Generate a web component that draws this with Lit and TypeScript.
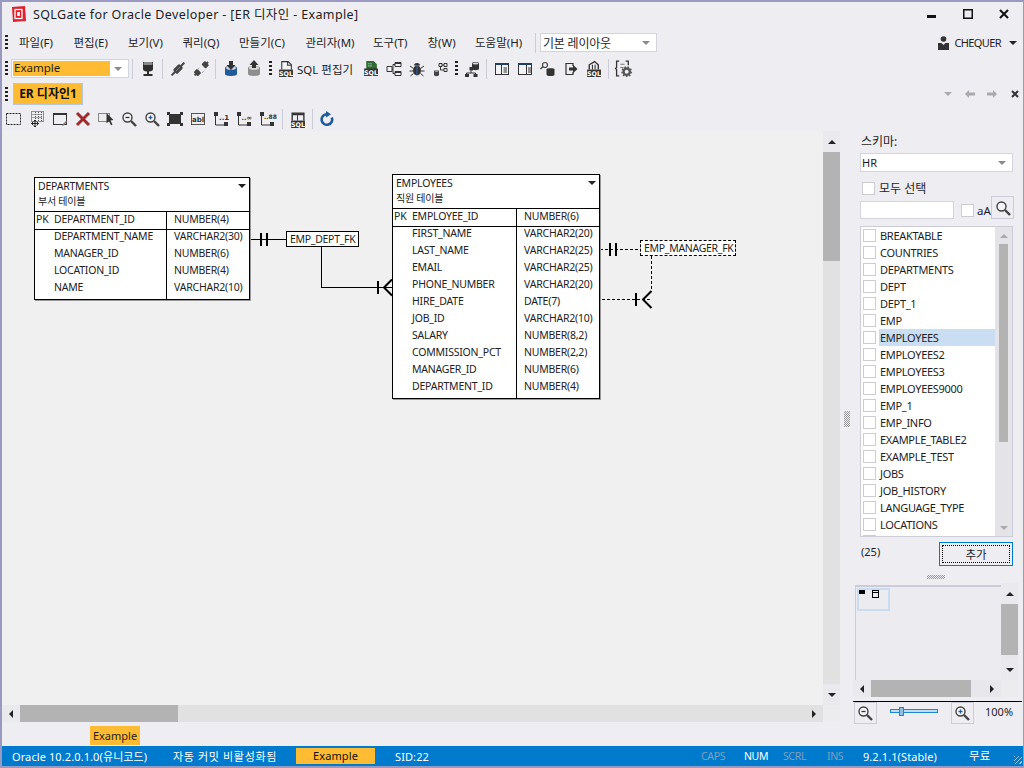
import { LitElement, html, css, svg } from "lit";
import { customElement } from "lit/decorators.js";

const D = "#424242";
const ic = (body: unknown, size = 16) => html`<svg class="svgi" width=${size} height=${size} viewBox="0 0 16 16">${body}</svg>`;
const sqlBadge = (x = 3, y = 9) => svg`<rect x=${x} y=${y} width="13" height="7" fill="#333"/><text x=${x + 6.5} y=${y + 6} text-anchor="middle" font-family="DejaVu Sans" font-weight="700" font-size="6" fill="#fff">SQL</text>`;
const mag = (plus: "" | "-" | "+", col = D) => svg`<circle cx="6.5" cy="6.5" r="4.5" fill="#fff" fill-opacity=".4" stroke=${D} stroke-width="1.4"/><path d="M10 10l5 5" stroke=${D} stroke-width="2.4"/>${plus ? svg`<path d="M4.5 6.5h4" stroke=${col} stroke-width="1.3"/>` : ""}${plus === "+" ? svg`<path d="M6.5 4.5v4" stroke=${col} stroke-width="1.3"/>` : ""}`;
const rel = (label: unknown) => ic(svg`<rect x="1" y="1" width="4" height="4" fill="#333"/><path d="M2.5 5v9H12" fill="none" stroke="#333"/><rect x="11" y="11" width="4" height="4" fill="#333"/>${label}`);
const cyl = (fill: string, top: string, arrow: string) => ic(svg`<path d="M2 7c0-2.6 12-2.6 12 0v6c0 2.6-12 2.6-12 0z" fill=${fill}/><ellipse cx="8" cy="7" rx="5" ry="1.8" fill=${top}/><path d=${arrow} fill="#333"/>`);

const ICONS: Record<string, unknown> = {
  db: ic(svg`<path d="M3 1h10v7q0 2-4 2.500V13h3.500v2h-9v-2H7v-2.500Q3 10 3 8z" fill="#2e2e2e"/><rect x="3.500" y="1" width="9" height="3" rx="1" fill="#8a8a8a"/>`),
  plug: ic(svg`<g transform="rotate(45 8 8)" fill="#444"><rect x="5" y="3.500" width="6" height="9" rx="1.500"/><rect x="7" y="-1" width="2" height="5"/><rect x="7" y="12" width="2" height="5"/></g><path d="M6 10l4-4" stroke="#888"/>`),
  unplug: ic(svg`<g transform="rotate(45 8 8)" fill="#444"><rect x="5" y="-.5" width="6" height="5" rx="1"/><rect x="5" y="10.500" width="6" height="5" rx="1"/><rect x="7" y="-2" width="2" height="3"/><rect x="7" y="15" width="2" height="2"/></g><path d="M4 9l3-3M9 12l3-3" stroke="#888" stroke-dasharray="1 1"/>`),
  dbin: cyl("#1f5c99", "#cfd6e0", "M6 0h4v4h2.500L8 9 3.500 4H6z"),
  dbout: cyl("#8f8f8f", "#d8d8d8", "M6 7h4V4h2.500L8 -1 3.500 4H6z"),
  sqldoc: ic(svg`<path d="M4.500 9V1.500h6l3 3V9" fill="#fff" fill-opacity=".3" stroke="#333"/><path d="M10 1.500V5h3.500" fill="none" stroke="#333"/>${sqlBadge(2, 9)}`, 17),
  sqlgreen: ic(svg`<path d="M4 9V1h7l3 3v5z" fill="#2e6b34"/><path d="M6 3h1v1H6zM8 3h1v1H8zM6 5h1v1H6zM8 5h1v1H8z" fill="#cfe8cf"/>${sqlBadge(2, 8)}`, 17),
  erd: ic(svg`<path d="M1 5.500h5v5H1zM9 1.500h6v4H9zM9 10.500h6v4H9z" fill="#fff" fill-opacity=".3" stroke="#333"/><path d="M9 3.500H7V12.500h2M6 8h1" fill="none" stroke="#333"/><path d="M9 1.500h6v1.500H9zM9 10.500h6V12H9z" fill="#333"/>`),
  bug: ic(svg`<ellipse cx="8" cy="9.500" rx="4" ry="5" fill="#333"/><path d="M5 4.500a3 2.500 0 0 1 6 0z" fill="#333"/><path d="M8 5v9" stroke="#2f6fb0"/><path d="M1 5l3.500 2.500M15 5l-3.500 2.500M.5 10H4M15.500 10H12M1.500 15l3-2.500M14.500 15l-3-2.500" stroke="#333" fill="none"/>`),
  flow: ic(svg`<path d="M7 2.500h3v3H7zM12 2.500h3v3h-3zM12 7.500h3v3h-3z" fill="none" stroke="#333"/><path d="M10 4h2M8.500 5.500V9H12" fill="none" stroke="#333"/><path d="M2 10c0-1.500 5-1.500 5 0v4c0 1.500-5 1.500-5 0z" fill="#444"/><ellipse cx="4.500" cy="10" rx="2" ry=".7" fill="#ccc"/>`),
  dbtree: ic(svg`<path d="M8 2c0-1.500 7-1.500 7 0v6c0 1.500-7 1.500-7 0z" fill="#333"/><ellipse cx="11.500" cy="2.500" rx="3" ry="1" fill="#ddd"/><rect x="5.500" y="6" width="3.500" height="3.500" fill="#333"/><path d="M7 9.500V12M2.500 15v-3h9v3" fill="none" stroke="#333"/><path d="M1 13h4v3H1zM9.500 13h4v3h-4z" fill="#333"/>`),
  panelL: ic(svg`<rect x="1.500" y="2.500" width="13" height="11" fill="#fff" fill-opacity=".3" stroke="#333"/><rect x="1" y="2" width="14" height="2" fill="#1f3f66"/><path d="M7.500 4v9M9.500 7h3.500M9.500 9h3.500M9.500 11h3.500" stroke="#333"/>`),
  panelR: ic(svg`<rect x="1.500" y="2.500" width="13" height="11" fill="#fff" fill-opacity=".3" stroke="#333"/><rect x="1" y="2" width="14" height="2" fill="#1f3f66"/><path d="M9.500 4v9M11 7h3M11 9h3M11 11h3" stroke="#333"/>`),
  dbkey: ic(svg`<circle cx="5" cy="4" r="2.500" fill="none" stroke="#444" stroke-width="1.200"/><path d="M3 5.500L.5 8" stroke="#444" stroke-width="1.500"/><path d="M6.500 8c0-1 8-1 8 0v5.500c0 2-8 2-8 0z" fill="#333"/>`),
  exit: ic(svg`<path d="M10 5V2.500H3v11h7V11" fill="none" stroke="#333" stroke-width="1.200"/><path d="M6 6.500h4V3.800L14.500 8 10 12.200V9.500H6z" fill="#333"/>`),
  sqllock: ic(svg`<path d="M4 9V4.500L9 1.500l3.500 3V9" fill="none" stroke="#333" stroke-width="1.300"/><path d="M7 9V4.500M9.500 9V4.500" stroke="#333"/>${sqlBadge(2, 9)}`, 17),
  cfg: ic(svg`<path d="M4 1H1.500v6L.5 8l1 1v6H4M10 1h2.500v4" fill="none" stroke="#333" stroke-width="1.200"/><path d="M5 4h4M5 7h3" stroke="#777"/><circle cx="11" cy="11" r="3" fill="none" stroke="#555" stroke-width="2.200"/><circle cx="11" cy="11" r="4.400" fill="none" stroke="#555" stroke-dasharray="1.500 1.500" stroke-width="1.400"/>`, 17),
  sel: ic(svg`<rect x=".5" y="2.500" width="14" height="11" fill="none" stroke="#222" stroke-dasharray="2 1"/>`),
  grid: ic(svg`<rect x="2.500" y=".5" width="12" height="10" fill="none" stroke="#333" stroke-dasharray="1 1"/><path d="M3.500 3.500h10M3.500 6.500h10M6.500 1v9M9.500 1v9M12.500 1v9" stroke="#555" stroke-dasharray="1 1"/><path d="M6 9v7M2.500 12.500h7M6 9l-1.500 1.500M6 9l1.500 1.500M6 16l-1.500-1.500M6 16l1.500-1.500M2.500 12.500L4 11M2.500 12.500L4 14M9.500 12.500L8 11M9.500 12.500L8 14" stroke="#222" fill="#eeeef2"/>`),
  win: ic(svg`<rect x="1.500" y="2.500" width="13" height="11" fill="none" stroke="#333"/><rect x="1" y="2" width="14" height="2" fill="#333"/><path d="M10 14l4.500-4.500 1 1L11 15z" fill="#777"/>`),
  del: ic(svg`<path d="M2 2l12 12M14 2L2 14" stroke="#9e2a2a" stroke-width="3"/>`),
  pick: ic(svg`<rect x=".5" y="2.500" width="11" height="8" fill="none" stroke="#222" stroke-dasharray="1 1"/><path d="M8.500 2l7 7-3 .5 2 4-1.500.8-2-4-2.500 2z" fill="#333"/>`),
  zout: ic(mag("-", "#333")),
  zin: ic(mag("+", "#1f5c99")),
  fit: ic(svg`<rect x="2" y="3" width="12" height="10" fill="#333"/><path d="M0 1h3v3H0zM13 1h3v3h-3zM0 12h3v3H0zM13 12h3v3h-3z" fill="#333"/>`),
  abl: ic(svg`<rect x="1.500" y="2.500" width="13" height="11" fill="none" stroke="#555"/><text x="8" y="11" text-anchor="middle" font-family="DejaVu Sans" font-size="7" font-weight="700" fill="#333">abl</text>`),
  rel1: rel(svg`<text x="6" y="9" font-family="DejaVu Sans" font-size="7" font-weight="700" fill="#333">..1</text>`),
  relN: rel(svg`<text x="5.500" y="9" font-family="DejaVu Sans" font-size="6.500" font-weight="700" fill="#333">..∞</text>`),
  relM: rel(svg`<text x="5" y="8" font-family="DejaVu Sans" font-size="6" font-weight="700" fill="#333">..88</text>`),
  sqltbl: ic(svg`<path d="M3 9V2h11v7" fill="none" stroke="#333" stroke-width="1.300"/><rect x="3" y="2" width="11" height="2" fill="#333"/><path d="M8 4v5" stroke="#333"/>${sqlBadge(2, 9)}`, 17),
  refresh: ic(svg`<path d="M12.800 6.500A5.300 5.300 0 1 1 7.500 3.200" fill="none" stroke="#1c5a9c" stroke-width="2.600"/><path d="M7 0l5 3.200L7 6.500z" fill="#1c5a9c"/>`),
  search: ic(mag("")),
};

const MENUS = ["파일(F)", "편집(E)", "보기(V)", "쿼리(Q)", "만들기(C)", "관리자(M)", "도구(T)", "창(W)", "도움말(H)"];
const TABLES = ["BREAKTABLE", "COUNTRIES", "DEPARTMENTS", "DEPT", "DEPT_1", "EMP", "EMPLOYEES", "EMPLOYEES2", "EMPLOYEES3", "EMPLOYEES9000", "EMP_1", "EMP_INFO", "EXAMPLE_TABLE2", "EXAMPLE_TEST", "JOBS", "JOB_HISTORY", "LANGUAGE_TYPE", "LOCATIONS", ""];

interface Node { name: string; comment: string; left: number; top: number; width: number; col: number; pk: [string, string]; rows: [string, string][]; }
const NODES: Node[] = [
  { name: "DEPARTMENTS", comment: "부서 테이블", left: 32, top: 46, width: 216, col: 132, pk: ["DEPARTMENT_ID", "NUMBER(4)"],
    rows: [["DEPARTMENT_NAME", "VARCHAR2(30)"], ["MANAGER_ID", "NUMBER(6)"], ["LOCATION_ID", "NUMBER(4)"], ["NAME", "VARCHAR2(10)"]] },
  { name: "EMPLOYEES", comment: "직원 테이블", left: 390, top: 43, width: 208, col: 124, pk: ["EMPLOYEE_ID", "NUMBER(6)"],
    rows: [["FIRST_NAME", "VARCHAR2(20)"], ["LAST_NAME", "VARCHAR2(25)"], ["EMAIL", "VARCHAR2(25)"], ["PHONE_NUMBER", "VARCHAR2(20)"], ["HIRE_DATE", "DATE(7)"], ["JOB_ID", "VARCHAR2(10)"], ["SALARY", "NUMBER(8,2)"], ["COMMISSION_PCT", "NUMBER(2,2)"], ["MANAGER_ID", "NUMBER(6)"], ["DEPARTMENT_ID", "NUMBER(4)"]] },
];

type Tool = { i?: string; sep?: boolean; grip?: boolean; text?: string };
const TOOL1: Tool[] = [{ sep: true }, { i: "db" }, { sep: true }, { i: "plug" }, { i: "unplug" }, { sep: true }, { i: "dbin" }, { i: "dbout" }, { grip: true }, { i: "sqldoc" }, { text: "SQL 편집기" }, { i: "sqlgreen" }, { i: "erd" }, { i: "bug" }, { i: "flow" }, { grip: true }, { i: "dbtree" }, { sep: true }, { i: "panelL" }, { i: "panelR" }, { i: "dbkey" }, { i: "exit" }, { i: "sqllock" }, { sep: true }, { i: "cfg" }];
const TOOL2: Tool[] = [{ i: "sel" }, { i: "grid" }, { i: "win" }, { i: "del" }, { i: "pick" }, { i: "zout" }, { i: "zin" }, { i: "fit" }, { i: "abl" }, { i: "rel1" }, { i: "relN" }, { i: "relM" }, { sep: true }, { i: "sqltbl" }, { sep: true }, { i: "refresh" }];

const tools = (list: Tool[]) => list.map((t) =>
  t.sep ? html`<span class="sep"></span>` :
  t.grip ? html`<span class="gripcell"><span class="grip"></span></span>` :
  t.text ? html`<span class="tooltext">${t.text}</span>` :
  html`<span class="tool">${ICONS[t.i!]}</span>`);

const arrow = (dir: "up" | "down" | "left" | "right", cls = "") => html`<span class="arr ${dir} ${cls}"></span>`;

@customElement("app-root")
export class AppRoot extends LitElement {
  static styles = css`
    :host { display: block; width: 1024px; height: 768px; overflow: hidden; font-family: "Noto Sans", "Noto Sans CJK KR", sans-serif; font-size: 11px; color: #1e1e1e; }
    * { box-sizing: border-box; }
    .win { width: 1024px; height: 768px; display: flex; flex-direction: column; background: #eeeef2; border: solid #9a9ac0; border-width: 2px 1px 2px 2px; }
    .svgi { display: block; overflow: visible; }

    .title { height: 29px; flex: none; display: flex; align-items: center; padding: 0 1px 6px 9px; font-size: 12.500px; letter-spacing: .37px; }
    .logo { width: 15px; height: 16px; margin-right: 7px; }
    .winbtns { margin-left: auto; display: flex; align-items: center; }
    .wb { width: 36px; display: flex; justify-content: center; }

    .bar { display: flex; align-items: center; flex: none; }
    .menubar { height: 25px; padding: 0 0 2px 3px; }
    .grip { display: block; width: 3px; height: 15px; background: repeating-linear-gradient(#222 0 2px, #fff0 2px 4px); }
    .menus { display: grid; grid-template-columns: 35px 35px 35px 37px 47px 48px 35px 28px 47px; column-gap: 19.500px; margin: 0 10px 0 11px; padding-bottom: 2px; font-size: 11.500px; white-space: nowrap; }
    .sep { display: block; width: 1px; height: 20px; background: #ccccd8; margin: 0 3px 0 3px; flex: none; }
    .combo { display: flex; align-items: center; background: #fff; border: 1px solid #d4d4de; position: relative; }
    .combo .arr { position: absolute; right: 6px; top: 50%; margin-top: -2px; }
    .layout { width: 117px; height: 19px; padding-left: 2px; font-size: 12px; margin-left: 1px; letter-spacing: -.2px; }
    .user { margin-left: auto; display: flex; align-items: center; padding-right: 6px; font-size: 11px; letter-spacing: -.6px; }
    .user svg { margin-right: 5px; }
    .user .arr { margin-left: 8px; }

    .toolbar { height: 25px; padding-left: 3px; }
    .dbcombo { width: 118px; height: 19px; margin: 0 0 0 3px; padding: 1px; }
    .dbcombo b { display: block; width: 97px; height: 15px; background: #ffbc33; font-weight: 400; font-size: 11.500px; line-height: 14px; padding-left: 1px; }
    .tool { width: 23px; flex: none; display: flex; align-items: center; justify-content: center; }
    .gripcell { width: 9px; padding-left: 4px; flex: none; }
    .tooltext { width: 62px; flex: none; white-space: nowrap; font-size: 11.500px; }

    .tabs { height: 26px; padding-left: 3px; }
    .tab { margin-left: 5px; width: 70px; height: 22px; background: #ffbc33; border: 1px solid #b4c8dc; font-weight: 700; font-size: 12px; line-height: 20px; text-align: center; white-space: nowrap; color: #111; }
    .tabctl { margin-left: auto; display: flex; align-items: center; }
    .tabctl > span { width: 22px; display: flex; justify-content: center; }
    .tabctl > span:last-child { width: 16px; margin-left: 4px; }
    .ertools { height: 24px; padding-left: .5px; }

    .main { flex: 1; min-height: 0; display: flex; }
    .work { width: 838px; flex: none; height: 591px; display: grid; grid-template-columns: 821px 17px; grid-template-rows: 574px 17px; }
    .canvas { position: relative; background: #f0f0f0; overflow: hidden; }
    .wires { position: absolute; left: 0; top: 0; }
    .node { position: absolute; background: #fff; border: 1px solid #000; box-shadow: 1px 1px 0 #999; font-size: 10.500px; color: #222; letter-spacing: -.22px; }
    .nhead { height: 34px; border-bottom: 1px solid #000; padding: 1px 3px; line-height: 15px; position: relative; }
    .nhead .arr { position: absolute; right: 3px; top: 6px; border-top-color: #111; }
    .cmt { font-size: 10px; }
    .ngrid { display: grid; grid-template-columns: var(--col) 1fr; }
    .pk { height: 18px; border-bottom: 1px solid #000; line-height: 15px; }
    .c1 { border-right: 1px solid #000; display: block; padding-left: 19px; position: relative; }
    .c2 { padding-left: 7px; }
    .pkmark { position: absolute; left: 1px; }
    .ncols { padding-bottom: 1px; }
    .nrow { height: 17px; line-height: 13px; white-space: nowrap; }
    .rlabel { position: absolute; background: #fff; font-size: 10.500px; letter-spacing: -.3px; line-height: 14px; white-space: nowrap; padding-left: 3px; }
    .rsolid { left: 284px; top: 100px; width: 73px; height: 16px; border: 1px solid #000; }
    .rdash { left: 638px; top: 109px; width: 96px; height: 16px; border: 1px dashed #000; }

    .sb { background: #e1e1e1; display: flex; position: relative; }
    .sb.v { flex-direction: column; }
    .sbbtn { flex: none; background: #eaeaee; display: flex; align-items: center; justify-content: center; }
    .sb.v .sbbtn { height: 21px; }
    .sb.h .sbbtn { width: 18px; }
    .sb.h .sbbtn:last-child { background: none; }
    .thumb { background: #b3b3b3; flex: none; }
    .corner { background: #ececef; }
    .mainv .thumb { height: 109px; }
    .mainh .thumb { width: 158px; }
    .fill { flex: 1; }

    .arr { display: block; width: 0; height: 0; border: solid transparent; }
    .arr.up { border-width: 0 4px 4px; border-bottom-color: #222; }
    .arr.down { border-width: 4px 4px 0; border-top-color: #222; }
    .arr.left { border-width: 4px 4px 4px 0; border-right-color: #222; }
    .arr.right { border-width: 4px 0 4px 4px; border-left-color: #222; }
    .arr.down.g { border-width: 4px 4px 0; border-top-color: #8a8a8a; }
    .arr.up.g { border-bottom-color: #aaa; }
    .arr.down.lg { border-top-color: #aaa; }

    .split { width: 14px; flex: none; display: flex; align-items: center; justify-content: center; padding-bottom: 18px; }
    .split i { display: block; width: 6px; height: 16px; background: conic-gradient(#999 25%, #fff0 0 50%, #999 0 75%, #fff0 0) 0 0 / 2px 2px; }

    .side { width: 168px; flex: none; display: flex; flex-direction: column; }
    .pad { padding: 0 9px 0 6px; flex: none; }
    .lab { height: 22px; line-height: 21px; font-size: 12px; padding-left: 7px; }
    .schema { height: 19px; padding-left: 1px; font-size: 11px; }
    .allrow { height: 24px; display: flex; align-items: center; padding: 8px 0 0 8px; font-size: 12px; }
    .chk { display: block; flex: none; width: 13px; height: 13px; background: #fff; border: 1px solid #ccccd4; }
    .allrow .chk { margin-right: 4px; }
    .search { height: 23px; display: flex; align-items: flex-end; }
    .inp { flex: none; width: 94px; height: 18px; background: #fff; border: 1px solid #d4d4de; }
    .search .chk { margin: 0 3px 2px 7px; }
    .aa { flex: none; font-size: 11.500px; line-height: 16px; width: 14px; }
    .sbtn { flex: none; width: 23px; height: 23px; border: 1px solid #ccccd8; display: flex; align-items: center; justify-content: center; background: #eeeef2; }
    .list { margin-top: 7px; height: 311px; background: #fff; border: 1px solid #ccccd8; display: flex; overflow: hidden; }
    .items { flex: 1; min-width: 0; margin-top: -.5px; }
    .item { height: 17px; display: flex; align-items: center; padding-left: 2px; font-size: 11px; letter-spacing: -.3px; white-space: nowrap; }
    .item .chk { margin-right: 3px; }
    .item span:last-child { flex: 1; height: 17px; line-height: 17px; padding-left: 1px; }
    .item.on span:last-child { background: #c9ddf3; }
    .lsb { width: 17px; flex: none; background: #e4e4e8; display: flex; flex-direction: column; align-items: center; }
    .lsb .t { height: 17px; display: flex; align-items: center; }
    .lsb .thumb { width: 9px; height: 198px; }
    .lsb .b { margin-top: auto; height: 17px; display: flex; align-items: center; }
    .actions { height: 24px; margin-top: 5px; display: flex; align-items: center; justify-content: space-between; }
    .count { padding-left: 1px; font-size: 11px; padding-bottom: 6px; }
    .add { width: 74px; height: 24px; border: 1px solid #007acc; padding: 2px; display: block; }
    .add span { display: block; height: 100%; border: 1px dotted #000; text-align: center; line-height: 17px; font-size: 11.500px; }
    .hgrip { height: 18px; display: flex; align-items: center; justify-content: center; flex: none; padding: 4px 5px 0 0; }
    .hgrip i { display: block; width: 18px; height: 4px; background: conic-gradient(#999 25%, #fff0 0 50%, #999 0 75%, #fff0 0) 0 0 / 2px 2px; }

    .ov { flex: none; height: 116px; margin-left: -1px; display: grid; grid-template-columns: 148px 17px; grid-template-rows: 97px 17px; margin-top: -1px; }
    .ovp { background: #ebebf0; border: 1px solid #ccccd8; border-width: 2px 0 0 1px; margin: 2px 0 0 2px; padding: 1px; }
    .mini { display: block; width: 33px; height: 23px; border: 2px solid #c8ddf2; position: relative; }
    .minisvg { display: block; }
    .ovv .sbbtn { height: 19px; }
    .ovv { background: #e8e8ec; }
    .ovv .thumb { height: 51px; }
    .ovh { background: #e8e8ec; }
    .ovh .thumb { width: 100px; }
    .ovh .sbbtn { width: 19px; }
    .zoom { flex: none; height: 24px; margin-left: -1px; border-top: 1px solid #000; margin-top: 2px; display: flex; align-items: flex-start; }
    .zbtn { width: 23px; height: 22px; margin-left: 1px; border: 1px solid #ccccd8; display: flex; align-items: center; justify-content: center; }
    .zbtn svg { margin-left: -2px; }
    .slider { width: 48px; height: 4px; border: 1px solid #1c87d0; background: #c0dcf0; margin: 7px 12px 0 13px; position: relative; }
    .slider i { position: absolute; left: 8px; top: -3px; width: 5px; height: 9px; background: #8dc0e8; border: 1px solid #1c87d0; }
    .pct { margin-left: 11px; font-size: 11px; line-height: 20px; }

    .doctabs { height: 21px; flex: none; padding-left: 88px; }
    .doctab { width: 50px; height: 19px; background: #ffbc33; font-size: 11px; line-height: 19px; text-align: center; }
    .status { height: 20px; flex: none; background: #007acc; color: #fff; display: flex; align-items: center; font-size: 11px; white-space: nowrap; letter-spacing: .1px; }
    .status > span { flex: none; }
    .st1 { margin-left: 10px; width: 161px; }
    .st2 { width: 123px; letter-spacing: .65px; }
    .st3 { width: 79px; height: 16px; background: #ffbc33; color: #111; text-align: center; line-height: 16px; }
    .st4 { margin-left: 20px; }
    .strt { margin-left: auto; display: grid; grid-template-columns: 43px 39px 44px 36px auto; align-items: center; }
    .lock { font-size: 10.500px; letter-spacing: -.3px; }
    .off { color: #7fa0c0; }
    .free { margin-left: 32px; width: 32px; font-size: 11.500px; padding-bottom: 3px; }
    .rsz { display: block; width: 8px; height: 8px; margin: 8px 1px 0 13px; background: repeating-linear-gradient(135deg, #9cc4e4 0 1px, #fff0 1px 3px); }
  `;

  private vs(cls: string) {
    return html`<div class="sb v ${cls}"><span class="sbbtn">${arrow("up")}</span><span class="thumb"></span><span class="fill"></span><span class="sbbtn">${arrow("down")}</span></div>`;
  }
  private hs(cls: string) {
    return html`<div class="sb h ${cls}"><span class="sbbtn">${arrow("left")}</span><span class="thumb"></span><span class="fill"></span><span class="sbbtn">${arrow("right")}</span></div>`;
  }

  private wires() {
    return html`<svg class="wires" width="821" height="574" viewBox="2 131 821 574" fill="none" stroke="#000" shape-rendering="crispEdges">
      <path d="M250 239.500H287"/>
      <path d="M260.500 233V246M266.500 233V246M377.500 281V294" stroke-width="2"/>
      <path d="M321.500 246V287.500H392"/>
      <path d="M384 287.500L392 279.500M384 287.500L392 295.500" stroke-width="2" shape-rendering="auto"/>
      <path d="M600 249.500H641M651.500 256V291M602 299.500H651" stroke-dasharray="3 2"/>
      <path d="M609.500 243V256M615.500 243V256M636 293V306" stroke-width="2"/>
      <path d="M643 299.500L651.500 291M643 299.500L651.500 308" stroke-width="2" shape-rendering="auto"/>
    </svg>`;
  }

  private node(n: Node) {
    return html`<div class="node" style="left:${n.left}px;top:${n.top}px;width:${n.width}px;--col:${n.col}px">
      <div class="nhead">${n.name}<br /><span class="cmt">${n.comment}</span>${arrow("down")}</div>
      <div class="ngrid pk"><span class="c1"><span class="pkmark">PK</span>${n.pk[0]}</span><span class="c2">${n.pk[1]}</span></div>
      <div class="ngrid">
        <div class="c1 ncols">${n.rows.map((r) => html`<div class="nrow">${r[0]}</div>`)}</div>
        <div class="c2 ncols">${n.rows.map((r) => html`<div class="nrow">${r[1]}</div>`)}</div>
      </div>
    </div>`;
  }

  render() {
    return html`<div class="win">
      <div class="title">
        <svg class="logo" viewBox="0 0 15 16"><path d="M1 1l13-1 1 15-13 1z" fill="#e0202c"/><rect x="4" y="3.500" width="7" height="9" fill="none" stroke="#fff" stroke-width="1.300"/><rect x="6.200" y="6" width="2.600" height="4" fill="#fff"/></svg>
        <span>SQLGate for Oracle Developer - [ER 디자인 - Example]</span>
        <div class="winbtns">
          <span class="wb"><svg width="10" height="10"><rect y="6" width="9" height="3" fill="#111"/></svg></span>
          <span class="wb"><svg width="10" height="10"><rect x=".75" y=".75" width="8.500" height="8.500" fill="none" stroke="#111" stroke-width="1.500"/></svg></span>
          <span class="wb"><svg width="10" height="10"><path d="M1 1l8 8M9 1l-8 8" stroke="#111" stroke-width="2"/></svg></span>
        </div>
      </div>

      <div class="bar menubar">
        <span class="grip"></span>
        <div class="menus">${MENUS.map((m) => html`<span>${m}</span>`)}</div>
        <span class="sep"></span>
        <div class="combo layout">기본 레이아웃${arrow("down", "g")}</div>
        <div class="user">
          <svg width="11" height="14" viewBox="0 0 11 14"><circle cx="5.500" cy="3" r="2.800" fill="#333"/><path d="M0 7h3.500l2 2 2-2H11v7H0z" fill="#333"/></svg>
          CHEQUER${arrow("down")}
        </div>
      </div>

      <div class="bar toolbar">
        <span class="grip"></span>
        <div class="combo dbcombo"><b>Example</b>${arrow("down", "g")}</div>
        ${tools(TOOL1)}
      </div>

      <div class="bar tabs">
        <span class="grip"></span>
        <div class="tab">ER 디자인1</div>
        <div class="tabctl">
          <span>${arrow("down", "lg")}</span>
          <span><svg width="10" height="8"><path d="M0 4l4-4v2.500h6v3H4V8z" fill="#aaa"/></svg></span>
          <span><svg width="10" height="8"><path d="M10 4L6 0v2.500H0v3h6V8z" fill="#aaa"/></svg></span>
          <span><svg width="8" height="8"><path d="M1 1l6 6M7 1l-6 6" stroke="#333" stroke-width="2"/></svg></span>
        </div>
      </div>

      <div class="bar ertools">${tools(TOOL2)}</div>

      <div class="main">
        <div class="work">
          <div class="canvas">
            ${this.wires()}
            ${NODES.map((n) => this.node(n))}
            <div class="rlabel rsolid">EMP_DEPT_FK</div>
            <div class="rlabel rdash">EMP_MANAGER_FK</div>
          </div>
          ${this.vs("mainv")}
          ${this.hs("mainh")}
          <div class="corner"></div>
        </div>
        <div class="split"><i></i></div>
        <div class="side">
          <div class="pad lab">스키마:</div>
          <div class="pad"><div class="combo schema">HR${arrow("down", "g")}</div></div>
          <div class="pad allrow"><span class="chk"></span>모두 선택</div>
          <div class="pad search"><span class="inp"></span><span class="chk"></span><span class="aa">aA</span><span class="sbtn">${ICONS.search}</span></div>
          <div class="pad"><div class="list">
            <div class="items">${TABLES.map((t) => html`<div class="item ${t === "EMPLOYEES" ? "on" : ""}"><span class="chk"></span><span>${t}</span></div>`)}</div>
            <div class="lsb"><span class="t">${arrow("up", "g")}</span><span class="thumb"></span><span class="b">${arrow("down", "lg")}</span></div>
          </div></div>
          <div class="pad actions"><span class="count">(25)</span><span class="add"><span>추가</span></span></div>
          <div class="hgrip"><i></i></div>
          <div class="ov">
            <div class="ovp"><span class="mini"><svg class="minisvg" width="22" height="10"><rect x="0" y="0" width="6" height="4" fill="#000"/><rect x="13.500" y=".5" width="6" height="7" fill="none" stroke="#000"/><path d="M13 2.500h7" stroke="#000"/></svg></span></div>
            ${this.vs("ovv")}
            ${this.hs("ovh")}
            <div class="corner"></div>
          </div>
          <div class="zoom">
            <span class="zbtn">${ICONS.zout}</span>
            <span class="slider"><i></i></span>
            <span class="zbtn">${ICONS.zin}</span>
            <span class="pct">100%</span>
          </div>
        </div>
      </div>

      <div class="bar doctabs"><span class="doctab">Example</span></div>

      <div class="status">
        <span class="st1">Oracle 10.2.0.1.0(유니코드)</span>
        <span class="st2">자동 커밋 비활성화됨</span>
        <span class="st3">Example</span>
        <span class="st4">SID:22</span>
        <div class="strt">
          <span class="lock off">CAPS</span><span class="lock">NUM</span><span class="lock off">SCRL</span><span class="lock off">INS</span><span>9.2.1.1(Stable)</span>
        </div>
        <span class="free">무료</span>
        <i class="rsz"></i>
      </div>
    </div>`;
  }
}
